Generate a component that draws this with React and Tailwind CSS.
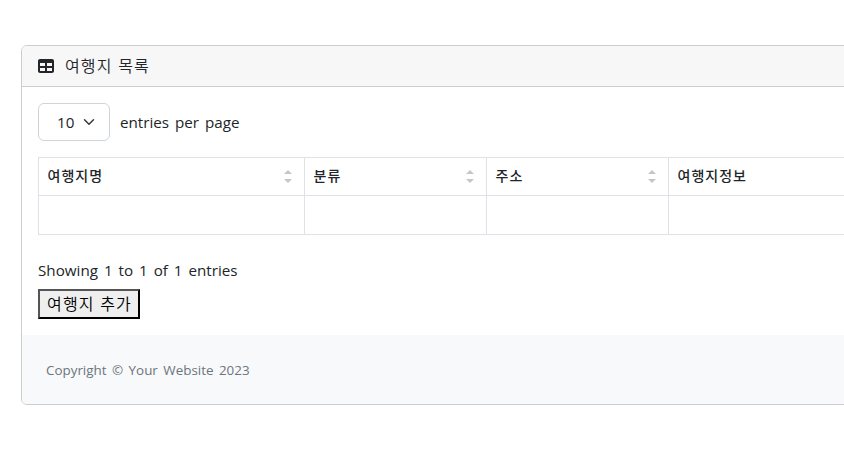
import React from "react";
import { FaTable } from "react-icons/fa6";

function SortIcon() {
  return (
    <svg className="mr-1 h-[14px] w-2 shrink-0 -translate-y-px fill-[#c6c6c6]" viewBox="0 0 8 14" aria-hidden="true">
      <path d="M0 5 4 1 8 5Z" />
      <path d="M0 10 4 14 8 10Z" />
    </svg>
  );
}

function HeaderCell({ children, width }) {
  return (
    <th className={`${width} h-[38px] border border-[#dee2e6] px-2 text-left font-medium`}>
      <div className="flex items-center justify-between text-[14px] leading-6 tracking-[1px]">
        <span className="-mt-[2px] ml-[0.5px]">{children}</span>
        <SortIcon />
      </div>
    </th>
  );
}

export default function App() {
  return (
    <div className="h-[463px] w-full overflow-hidden whitespace-nowrap bg-white pl-[21px] pt-[45px] font-['Open_Sans','Noto_Sans_CJK_KR',sans-serif] text-base leading-6 text-[#212529]">
      <div className="h-[360px] w-[1100px] overflow-hidden rounded-md border border-[#cccdce] bg-white">
        <div className="flex h-[41px] items-center border-b border-[#cccdce] bg-[#f7f7f7] pl-4">
          <FaTable className="size-4" />
          <span className="-mt-[2px] ml-[11px] font-['Noto_Sans_CJK_KR',sans-serif] font-[350] tracking-[1.1px] [word-spacing:1px]">여행지 목록</span>
        </div>
        <div className="h-[248px] px-4 pt-4">
          <div className="flex items-center">
            <button className="flex h-[38px] w-[72px] items-center justify-between rounded-md border border-[#ced4da] pl-[18px] pr-[14px]">
              <span className="text-[15.2px]">10</span>
              <svg className="size-3" viewBox="0 0 16 16" fill="none" stroke="#343a40" strokeWidth="2" strokeLinecap="round" strokeLinejoin="round">
                <path d="m2 5 6 6 6-6" />
              </svg>
            </button>
            <span className="ml-[10px] text-[15.2px] [word-spacing:2px]">entries per page</span>
          </div>
          <table className="mt-4 w-[1060px] table-fixed border-collapse">
            <thead>
              <tr>
                <HeaderCell width="w-[266px]">여행지명</HeaderCell>
                <HeaderCell width="w-[182px]">분류</HeaderCell>
                <HeaderCell width="w-[182px]">주소</HeaderCell>
                <HeaderCell width="w-[430px]">여행지정보</HeaderCell>
              </tr>
            </thead>
            <tbody>
              <tr>
                <td className="h-[39px] border border-[#dee2e6]" />
                <td className="border border-[#dee2e6]" />
                <td className="border border-[#dee2e6]" />
                <td className="border border-[#dee2e6]" />
              </tr>
            </tbody>
          </table>
          <div className="mt-[23px] h-6 text-[15.2px] [word-spacing:2px]">Showing 1 to 1 of 1 entries</div>
          <button className="mt-[7px] flex h-[30px] w-[102px] items-center justify-center border-2 border-t-[#555] border-l-[#555] border-r-black border-b-black bg-[#efefef] font-['Noto_Sans_CJK_KR',sans-serif] font-[350] tracking-[1.1px] text-black [word-spacing:1px]">
            <span className="-mt-[2px] ml-px">여행지 추가</span>
          </button>
        </div>
        <footer className="flex h-[70px] items-center bg-[#f8f9fa] pl-6 text-[#6c757d]">
          <span className="text-[13.4px] [word-spacing:2px]">Copyright © Your Website 2023</span>
        </footer>
      </div>
    </div>
  );
}
